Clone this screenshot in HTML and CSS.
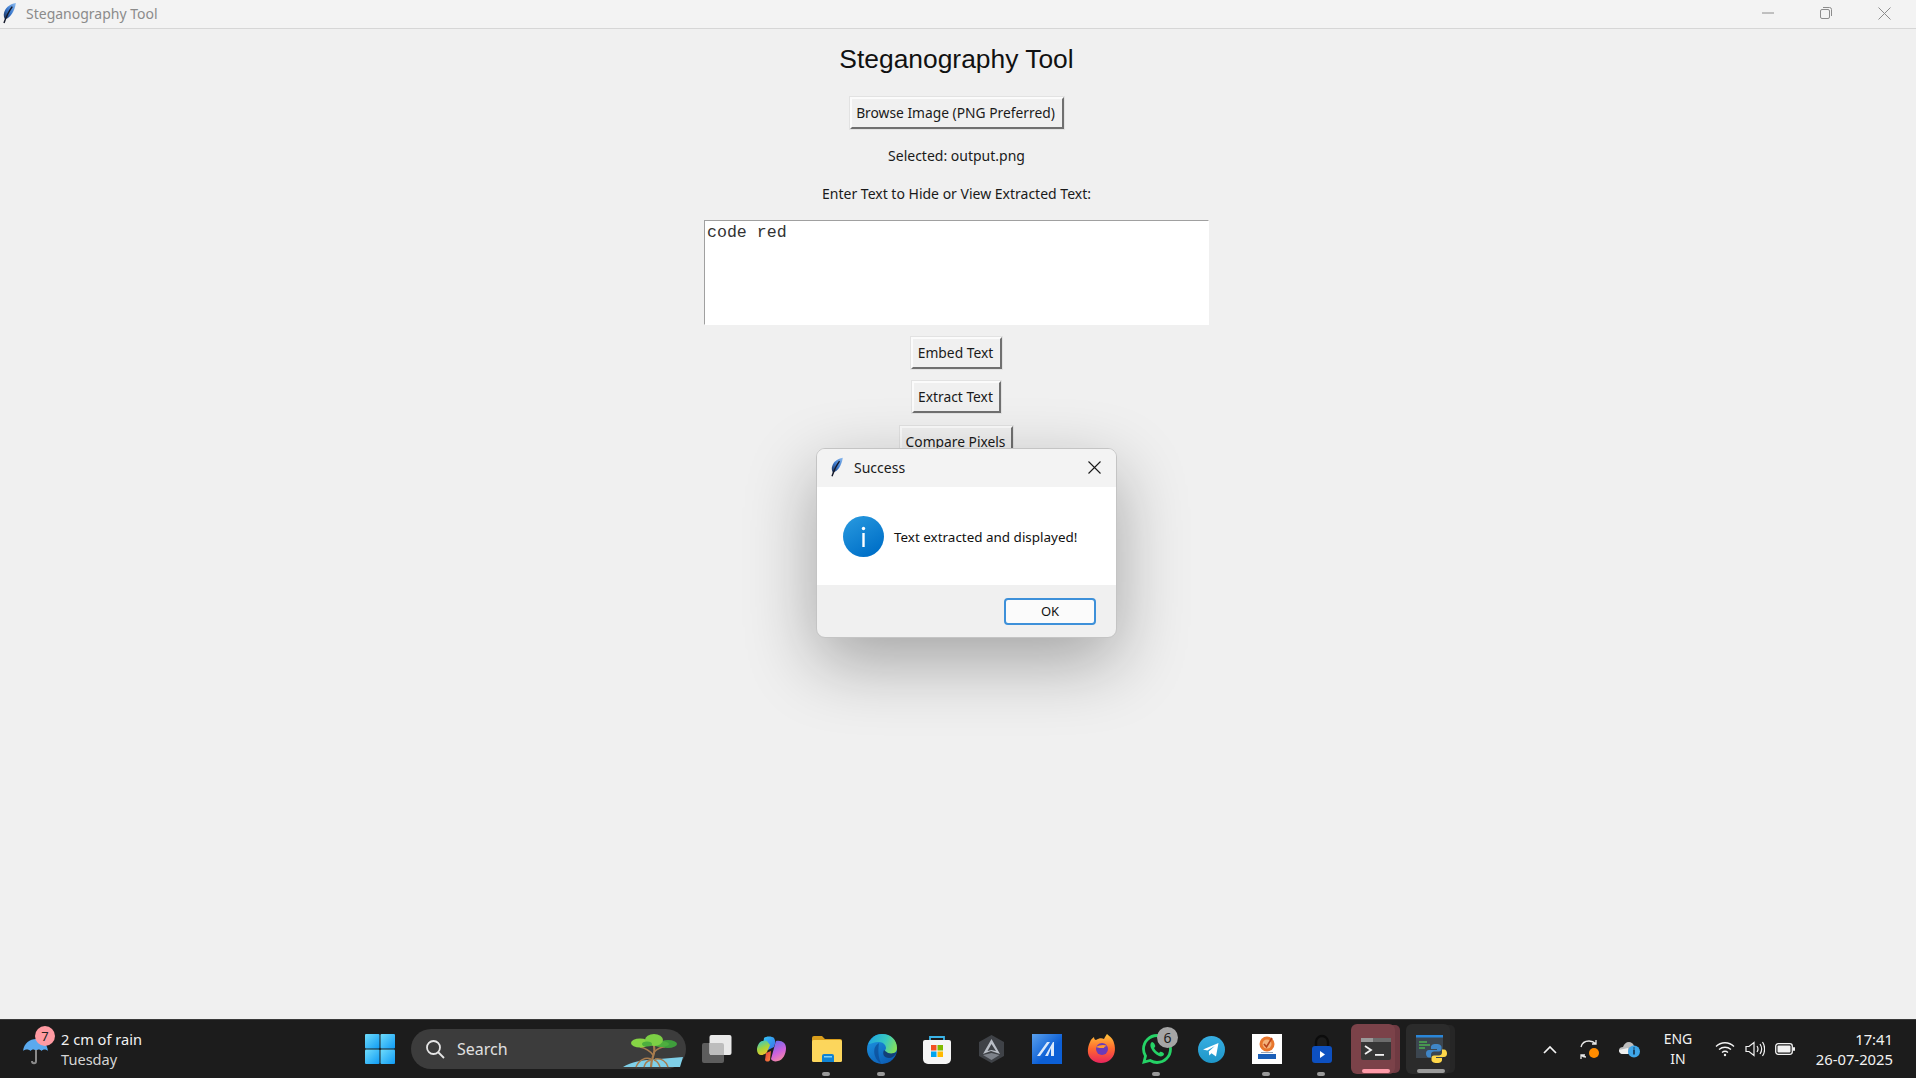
FILE: index.html
```html
<!DOCTYPE html>
<html lang="en">
<head>
    <meta charset="UTF-8">
    <meta name="viewport" content="width=device-width, initial-scale=1.0">
    <title>Steganography Tool</title>
    <link rel="stylesheet" href="styles.css">
</head>
<body>

    <svg class="svg-defs" width="0" height="0">
        <defs>
            <linearGradient id="featherBlue" x1="1" y1="0" x2="0" y2="1">
                <stop offset="0" stop-color="#8fbdf0"/>
                <stop offset="0.55" stop-color="#3a78cc"/>
                <stop offset="1" stop-color="#1a2c50"/>
            </linearGradient>
            <linearGradient id="infoBlue" x1="0" y1="0" x2="0.6" y2="1">
                <stop offset="0" stop-color="#2a9be0"/>
                <stop offset="1" stop-color="#0070c8"/>
            </linearGradient>
            <linearGradient id="winBlue" x1="0" y1="0" x2="1" y2="1">
                <stop offset="0" stop-color="#6fdcfb"/>
                <stop offset="1" stop-color="#0f9bf5"/>
            </linearGradient>
            <linearGradient id="edgeBlue" x1="0" y1="0" x2="0.7" y2="1">
                <stop offset="0" stop-color="#1e9ae6"/>
                <stop offset="1" stop-color="#0c5cb4"/>
            </linearGradient>
            <linearGradient id="edgeGreen" x1="0" y1="0.3" x2="1" y2="0.6">
                <stop offset="0" stop-color="#1fa8e0"/>
                <stop offset="0.55" stop-color="#38c8c0"/>
                <stop offset="1" stop-color="#86e05a"/>
            </linearGradient>
            <linearGradient id="copilotBlue" x1="0" y1="0" x2="1" y2="1">
                <stop offset="0" stop-color="#33c8f4"/>
                <stop offset="1" stop-color="#3a6cea"/>
            </linearGradient>
            <linearGradient id="copilotPink" x1="0.3" y1="0" x2="0.7" y2="1">
                <stop offset="0" stop-color="#6a6cec"/>
                <stop offset="0.55" stop-color="#cf62dc"/>
                <stop offset="1" stop-color="#f88e9c"/>
            </linearGradient>
            <linearGradient id="copilotGreen" x1="0.3" y1="0" x2="0.7" y2="1">
                <stop offset="0" stop-color="#3cc8c8"/>
                <stop offset="0.5" stop-color="#a6d43a"/>
                <stop offset="1" stop-color="#f8c22e"/>
            </linearGradient>
            <linearGradient id="copilotRed" x1="0" y1="0" x2="1" y2="1">
                <stop offset="0" stop-color="#e8383f"/>
                <stop offset="1" stop-color="#f88a3a"/>
            </linearGradient>
            <linearGradient id="foxOrange" x1="0.5" y1="0" x2="0.5" y2="1">
                <stop offset="0" stop-color="#ffc43a"/>
                <stop offset="0.5" stop-color="#ff6a2e"/>
                <stop offset="1" stop-color="#e8255d"/>
            </linearGradient>
            <linearGradient id="tgBlue" x1="0.5" y1="0" x2="0.5" y2="1">
                <stop offset="0" stop-color="#37aee2"/>
                <stop offset="1" stop-color="#1e96c8"/>
            </linearGradient>
            <symbol id="feather" viewBox="0 0 16 24">
                <path d="M15 1C8 2 2.500 7 1.800 13c-.2 2 .2 4 1.200 5.500 6.500-1 10.500-9 12-17.500z" fill="url(#featherBlue)"/>
                <path d="M11 5C8 9 5 14 2 23" stroke="#15192a" stroke-width="1.600" fill="none"/>
            </symbol>
        </defs>
    </svg>

    <header class="titlebar">
        <svg class="titlebar-icon"><use href="#feather"/></svg>
        <span class="titlebar-text">Steganography Tool</span>
        <div class="window-controls">
            <span class="window-control">
                <svg width="12" height="12" viewBox="0 0 12 12"><path d="M0 6h12" stroke="#8c8c8c" stroke-width="1"/></svg>
            </span>
            <span class="window-control">
                <svg width="12" height="12" viewBox="0 0 12 12" fill="none" stroke="#8c8c8c"><rect x=".5" y="2.500" width="9" height="9" rx="1.500"/><path d="M3 .5h6.500a2 2 0 0 1 2 2V9"/></svg>
            </span>
            <span class="window-control">
                <svg width="13" height="13" viewBox="0 0 13 13"><path d="M.5.5l12 12M12.500.5l-12 12" stroke="#8c8c8c" stroke-width="1"/></svg>
            </span>
        </div>
    </header>

    <main class="app">
        <h1>Steganography Tool</h1>
        <button class="tk-button browse-button">Browse Image (PNG Preferred)</button>
        <p class="tk-label selected-label">Selected: output.png</p>
        <p class="tk-label prompt-label">Enter Text to Hide or View Extracted Text:</p>
        <textarea class="text-box" readonly>code red</textarea>
        <button class="tk-button embed-button">Embed Text</button>
        <button class="tk-button extract-button">Extract Text</button>
        <button class="tk-button compare-button">Compare Pixels</button>

        <div class="dialog">
            <div class="dialog-title">
                <svg class="dialog-feather"><use href="#feather"/></svg>
                <span>Success</span>
                <svg class="dialog-close" width="13" height="13" viewBox="0 0 13 13"><path d="M.5.5l12 12M12.500.5l-12 12" stroke="#1a1a1a" stroke-width="1.100"/></svg>
            </div>
            <div class="dialog-body">
                <svg width="41" height="41" viewBox="0 0 41 41">
                    <circle cx="20.500" cy="20.500" r="20.500" fill="url(#infoBlue)"/>
                    <circle cx="20.500" cy="12.500" r="1.700" fill="#fff"/>
                    <rect x="19.300" y="17" width="2.400" height="14" fill="#fff"/>
                </svg>
                <span>Text extracted and displayed!</span>
            </div>
            <div class="dialog-footer">
                <button class="ok-button">OK</button>
            </div>
        </div>
    </main>

    <footer class="taskbar">
        <div class="weather">
            <svg class="weather-icon" width="30" height="34" viewBox="0 0 30 34">
                <path d="M1 19C2 11 8 7 14 7s11 4 12 12c-2-2-5-2-6.500 0-1.500-2-4-2-5.500 0-1.500-2-4-2-5.500 0C7 17 3 17 1 19z" fill="#5aa9ee"/>
                <path d="M14 18v11c0 3-4 3-4 0" stroke="#8a8a8a" stroke-width="2" fill="none"/>
            </svg>
            <span class="weather-badge">7</span>
            <div class="weather-text">
                <span>2 cm of rain</span>
                <span class="weather-day">Tuesday</span>
            </div>
        </div>

        <div class="tb-item">
            <svg width="30" height="30" viewBox="0 0 30 30" fill="url(#winBlue)">
                <rect width="14.500" height="14.500" rx="1"/><rect x="15.500" width="14.500" height="14.500" rx="1"/>
                <rect y="15.500" width="14.500" height="14.500" rx="1"/><rect x="15.500" y="15.500" width="14.500" height="14.500" rx="1"/>
            </svg>
        </div>

        <div class="search">
            <svg width="20" height="20" viewBox="0 0 20 20" fill="none" stroke="#e6e6e6" stroke-width="1.800"><circle cx="8.500" cy="8.500" r="6.500"/><path d="M13 13l6 6"/></svg>
            <span>Search</span>
            <svg class="search-art" width="60" height="34" viewBox="0 0 60 34">
                <path d="M0 33C8 28 20 26 30 25.500l30-2.500-3 10z" fill="#7fd0e8"/>
                <g stroke="#a87c4e" fill="none">
                    <path d="M28 33c0-6 2-10 3-14 1-3 0-5 0-8" stroke-width="2.200"/>
                    <path d="M30 21c-3-4-8-7-13-8M31 18c3-3 6-5 11-5" stroke-width="1.600"/>
                    <path d="M28 25c-6-2-12 1-15 8M28 26c-5 1-6 4-7 7M32 25c6-1 11 2 13 8M31 26c4 1 5 4 6 7" stroke-width="1.500"/>
                </g>
                <ellipse cx="17" cy="9" rx="9" ry="4.500" fill="#86d445"/>
                <ellipse cx="45" cy="10" rx="9" ry="4" fill="#3f9e3c"/>
                <ellipse cx="38" cy="10" rx="8" ry="3" fill="#4dae3e"/>
                <ellipse cx="31" cy="6" rx="9" ry="6" fill="#7ccf45"/>
                <ellipse cx="24" cy="10" rx="5" ry="2.500" fill="#4dae3e"/>
            </svg>
        </div>

        <div class="tb-apps">
            <div class="tb-item">
                <svg width="32" height="30" viewBox="0 0 32 30">
                    <rect x="1" y="9" width="22" height="20" rx="2" fill="#5d5d5d"/>
                    <rect x="8.500" y="1" width="22" height="20" rx="2" fill="#e9e9e9"/>
                    <path d="M8.500 9H21a2 2 0 0 1 2 2v10H10.500a2 2 0 0 1-2-2z" fill="#bdbdbd"/>
                </svg>
            </div>
            <div class="tb-item">
                <svg width="29" height="26" viewBox="0 0 29 26">
                    <path d="M7 2C9 0 15 0 17 2c2 3 1 6 0 9l-6 3-5-3z" fill="url(#copilotBlue)"/>
                    <path d="M19 5c6-1 10 2 10 7 0 6-3 12-8 13-3 1-6 0-7-2l3-11c1-3 1-5 2-7z" fill="url(#copilotPink)"/>
                    <path d="M5 5C2 6 0 10 0 14c0 3 2 5 4 5 2 0 5-1 6-3l3-7-3-4c-2-1-4 0-5 0z" fill="url(#copilotGreen)"/>
                    <path d="M9 17l5-2-1 9c-1 2-4 2-5 0z" fill="url(#copilotRed)"/>
                </svg>
            </div>
            <div class="tb-item">
                <svg width="32" height="28" viewBox="0 0 32 28">
                    <path d="M1 3a2 2 0 0 1 2-2h8l3 3h15a2 2 0 0 1 2 2v3H1z" fill="#d99e1c"/>
                    <rect x="1" y="5" width="30" height="22" rx="1.500" fill="#fcd65c"/>
                    <path d="M11 21a2 2 0 0 1 2-2h8a2 2 0 0 1 2 2v6H11z" fill="#1083d3"/>
                    <rect x="13" y="21" width="8" height="1.500" fill="#7fd0f6"/>
                </svg>
                <i class="tb-dot"></i>
            </div>
            <div class="tb-item">
                <svg width="30" height="32" viewBox="0 0 30 32">
                    <circle cx="15" cy="16" r="15" fill="url(#edgeBlue)"/>
                    <path d="M1.500 11C4 4.500 9 1 15 1c9 0 15 6 15 14 0 4-3 6-7 6-3 0-5-1-5-3 0-1 1-2 1-3 0-3-3-6-7-6-5 0-8 2-10.500 2z" fill="url(#edgeGreen)"/>
                    <path d="M17 17c-2 4 0 8 5 8 3 0 6-2 8-6-4 2-9 2-11-.5-1-.5-1-1-2-1.500z" fill="#123f78"/>
                    <path d="M12 10c-4 2-6 7-4 13 1 3 3 6 6 7-3-5-3-14-2-20z" fill="#0b4a94" opacity="0.700"/>
                </svg>
                <i class="tb-dot"></i>
            </div>
            <div class="tb-item">
                <svg width="30" height="30" viewBox="0 0 30 30">
                    <path d="M8 7V3h14v4" fill="none" stroke="#3ab4e8" stroke-width="1.800"/>
                    <path d="M1 8a2 2 0 0 1 2-2h24a2 2 0 0 1 2 2v17a5 5 0 0 1-5 5H6a5 5 0 0 1-5-5z" fill="#f5f5f5"/>
                    <rect x="9" y="11" width="5.500" height="5.500" fill="#f25022"/>
                    <rect x="15.500" y="11" width="5.500" height="5.500" fill="#7fba00"/>
                    <rect x="9" y="17.500" width="5.500" height="5.500" fill="#00a4ef"/>
                    <rect x="15.500" y="17.500" width="5.500" height="5.500" fill="#ffb900"/>
                </svg>
            </div>
            <div class="tb-item">
                <svg width="27" height="28" viewBox="0 0 27 28">
                    <path d="M13.500 0L26 7v14l-12.500 7L1 21V7z" fill="#3f4247"/>
                    <path d="M13.500 4L5 19l8-3 9 3z" fill="#b9bec6"/>
                    <path d="M13.500 9L9.500 16l4-1 4.500 1z" fill="#3f4247"/>
                    <path d="M5 20l8.500 5 8-5-8-2z" fill="#7d828a"/>
                </svg>
            </div>
            <div class="tb-item">
                <div class="app-square app-square-blue">
                    <svg width="30" height="30" viewBox="0 0 30 30">
                        <path d="M5 22L15 8h3L8 22zM13 22L21 8h1v14h-3v-8l-3 8z" fill="#dbe9fb"/>
                    </svg>
                </div>
            </div>
            <div class="tb-item">
                <svg width="30" height="30" viewBox="0 0 30 30">
                    <path d="M3 8c1-3 3-4 4-5 0 2 1 3 2 3 3-2 6-2 8-1 1-2 2-4 3-5 3 3 6 4 7 9 2 6 1 13-4 17-5 4-14 4-19-1C0 21 0 14 3 8z" fill="url(#foxOrange)"/>
                    <circle cx="15" cy="15" r="6" fill="#6b3ab8"/>
                    <path d="M9 13c3-2 8-3 11-1-2 0-3 1-3 2-3 0-6 0-8-1z" fill="#ff9a2e"/>
                </svg>
            </div>
            <div class="tb-item">
                <svg width="30" height="30" viewBox="0 0 30 30">
                    <path d="M15 1.500C7.500 1.500 1.500 7.500 1.500 15c0 2.600.7 5 2 7L2 28l6.200-1.500c2 1.200 4.300 2 6.800 2 7.500 0 13.500-6 13.500-13.500S22.500 1.500 15 1.500z" fill="none" stroke="#25d366" stroke-width="2.800"/>
                    <path d="M10 8c-2 1-2 4-1 6 2 4 4 6 8 8 2 1 5 0 5-2 0-1-3-3-4-2l-1 1c-2-1-4-3-5-5l1-1c1-1-1-5-3-5z" fill="#25d366"/>
                </svg>
                <span class="tb-count">6</span>
                <i class="tb-dot"></i>
            </div>
            <div class="tb-item">
                <svg width="27" height="27" viewBox="0 0 27 27">
                    <circle cx="13.500" cy="13.500" r="13.500" fill="url(#tgBlue)"/>
                    <path d="M5 13.500L20.500 7l-2.500 13.500-4.500-3.300-2.200 2.200-.5-4 6-5.500-7.500 4.700z" fill="#fff"/>
                </svg>
            </div>
            <div class="tb-item">
                <div class="app-square app-square-white">
                    <svg width="30" height="30" viewBox="0 0 30 30">
                        <circle cx="15" cy="10" r="7.500" fill="#e8762c"/>
                        <circle cx="15" cy="10" r="4.500" fill="#f3b27a"/>
                        <path d="M12 10l2.500 3L20 4" stroke="#b8431a" stroke-width="1.600" fill="none"/>
                        <rect x="6" y="20" width="18" height="5" fill="#1b5fb8"/>
                        <rect x="9" y="18" width="12" height="1" fill="#9aa7b8"/>
                    </svg>
                </div>
                <i class="tb-dot"></i>
            </div>
            <div class="tb-item">
                <svg width="22" height="30" viewBox="0 0 22 30">
                    <path d="M5 14V8a6 6 0 0 1 12 0v6" fill="none" stroke="#0c0c0c" stroke-width="2.400"/>
                    <rect x="1" y="12" width="20" height="17" rx="3" fill="#0d50c0"/>
                    <path d="M9 17l5 3.500-5 3.500z" fill="#fff"/>
                </svg>
                <i class="tb-dot"></i>
            </div>
            <div class="tb-item">
                <div class="tb-open tb-open-terminal">
                    <svg width="30" height="22" viewBox="0 0 30 22">
                        <rect width="30" height="22" rx="2" fill="#363636"/>
                        <rect width="12" height="4" fill="#9a9a9a"/>
                        <rect x="12" width="18" height="4" fill="#6c6c6c"/>
                        <path d="M4 8l6 4-6 4" stroke="#f2f2f2" stroke-width="1.800" fill="none"/>
                        <rect x="14" y="16" width="9" height="1.800" fill="#f2f2f2"/>
                    </svg>
                    <i class="tb-bar tb-bar-pink"></i>
                </div>
            </div>
            <div class="tb-item">
                <div class="tb-open">
                    <svg width="32" height="30" viewBox="0 0 32 30">
                        <rect x="1" y="1" width="27" height="23" fill="#3c4650"/>
                        <rect x="1" y="1" width="27" height="2.500" fill="#2a86d8"/>
                        <path d="M4 8h8M4 11h11M4 14h6" stroke="#4caf50" stroke-width="1.300"/>
                        <path d="M21 10c-4 0-5 1.500-5 3v2h6v1h-8c-2 0-3 1.500-3 3.500s1 4 3 4h2v-3c0-2 1.500-3 3-3h5c1.500 0 2.500-1 2.500-2.500V13c0-1.500-1.500-3-5.500-3z" fill="#3f86c8"/>
                        <path d="M22 29c4 0 5-1.500 5-3v-2h-6v-1h8c2 0 3-1.500 3-3.500s-1-4-3-4h-2v3c0 2-1.500 3-3 3h-5c-1.500 0-2.500 1-2.500 2.500V26c0 1.500 1.500 3 5.500 3z" fill="#ffd84a"/>
                    </svg>
                    <i class="tb-bar"></i>
                </div>
            </div>
        </div>

        <div class="tray">
            <span class="tray-item">
                <svg width="14" height="9" viewBox="0 0 14 9" fill="none" stroke="#f2f2f2" stroke-width="1.700"><path d="M1 8l6-6 6 6"/></svg>
            </span>
            <span class="tray-item">
                <svg width="22" height="22" viewBox="0 0 22 22" fill="none" stroke="#e8e8e8" stroke-width="1.300">
                    <path d="M2 9c1-4 4-6 8-6 3 0 5 1 7 3M17 2v4h-4"/>
                    <path d="M2 17c1 1 3 2 5 2M2 21v-4h4"/>
                    <circle cx="15" cy="15" r="5" fill="#ff8c00" stroke="none"/>
                </svg>
            </span>
            <span class="tray-item">
                <svg width="22" height="18" viewBox="0 0 22 18">
                    <path d="M4 14c-3 0-4-2-4-4s2-3 4-3c1-3 3-5 6-5 2 0 4 1 5 4 2 0 4 2 4 4H10v4z" fill="#bdbdbd"/>
                    <path d="M0 10c0 2 1 4 4 4h5V8z" fill="#efefef"/>
                    <circle cx="15" cy="11.500" r="6" fill="#3ea6e8"/>
                    <path d="M15 9.500v5M15 7.500v1" stroke="#10243a" stroke-width="1.500"/>
                </svg>
            </span>
            <span class="tray-lang">ENG<br>IN</span>
            <span class="tray-icon">
                <svg width="20" height="16" viewBox="0 0 20 16" fill="none" stroke="#f2f2f2" stroke-width="1.300">
                    <path d="M1 5.500c5-5 13-5 18 0M4 8.500c3.500-3 8.500-3 12 0M7 11.500c1.800-1.500 4.200-1.500 6 0"/>
                    <circle cx="10" cy="14" r="1.200" fill="#f2f2f2" stroke="none"/>
                </svg>
            </span>
            <span class="tray-icon">
                <svg width="20" height="16" viewBox="0 0 20 16" fill="none" stroke="#f2f2f2" stroke-width="1.200">
                    <path d="M1 5.500h3L9 1.500v13l-5-4H1z"/>
                    <path d="M12 5c1.200 1.800 1.200 4.200 0 6M15 3c2 3 2 7 0 10M17.500 1c2.800 4 2.800 10 0 14"/>
                </svg>
            </span>
            <span class="tray-icon">
                <svg width="20" height="12" viewBox="0 0 20 12">
                    <rect x=".7" y=".7" width="16.600" height="10.600" rx="2.500" fill="none" stroke="#f2f2f2" stroke-width="1.300"/>
                    <rect x="2.500" y="2.500" width="13" height="7" rx="1" fill="#f2f2f2"/>
                    <rect x="18" y="4" width="2" height="4" rx="1" fill="#f2f2f2"/>
                </svg>
            </span>
            <div class="clock">
                <span>17:41</span>
                <span>26-07-2025</span>
            </div>
        </div>
    </footer>

</body>
</html>
```
FILE: styles.css
```css
* {
    box-sizing: border-box;
}

body {
    font-family: "Noto Sans", Arial, sans-serif;
    background-color: #f0f0f0;
    margin: 0;
    padding: 0;
    width: 1916px;
    height: 1078px;
    display: flex;
    flex-direction: column;
    overflow: hidden;
}

.svg-defs {
    position: absolute;
}

.titlebar {
    height: 29px;
    flex-shrink: 0;
    display: flex;
    align-items: center;
    padding-bottom: 2px;
    background-color: #f3f3f3;
    border-bottom: 1px solid #d6d6d6;
}

.titlebar-icon {
    width: 15px;
    height: 22px;
    margin-left: 2px;
}

.titlebar-text {
    margin-left: 9px;
    font-size: 14px;
    color: #8b8b8b;
}

.window-controls {
    margin-left: auto;
    margin-right: 3px;
    display: flex;
}

.window-control {
    width: 58px;
    height: 26px;
    display: flex;
    align-items: center;
    justify-content: center;
}

.app {
    flex: 1;
    position: relative;
    display: flex;
    flex-direction: column;
    align-items: center;
    width: 100%;
    padding-right: 3px;
}

h1 {
    font-family: "Liberation Sans", Arial, sans-serif;
    font-size: 26.4px;
    font-weight: 400;
    line-height: 32px;
    color: #111;
    margin: 14px 0 0;
}

.tk-button {
    font-family: "Noto Sans", Arial, sans-serif;
    font-size: 13.8px;
    color: #1a1a1a;
    height: 32px;
    padding: 0 2px 2px 0;
    background-color: #f0f0f0;
    border: 2px solid;
    border-color: #fbfbfb #707070 #707070 #fbfbfb;
    box-shadow: 0 0 0 1px #e2e2e2;
}

.browse-button {
    width: 214px;
    margin-top: 22px;
}

.embed-button {
    width: 91px;
    margin-top: 12px;
}

.extract-button {
    width: 89px;
    margin-top: 12px;
}

.compare-button {
    width: 113px;
    margin-top: 13px;
}

.tk-label {
    font-size: 14px;
    line-height: 20px;
    color: #1a1a1a;
    margin: 0;
}

.selected-label {
    margin-top: 17px;
}

.prompt-label {
    margin-top: 18px;
}

.text-box {
    display: block;
    width: 505px;
    height: 105px;
    margin-top: 16px;
    padding: 2px 2px;
    font-family: "Liberation Mono", "Courier New", monospace;
    font-size: 16.6px;
    line-height: 19px;
    color: #333;
    background-color: #fff;
    border: 1px solid;
    border-color: #a0a0a0 #fff #fff #a0a0a0;
    resize: none;
    outline: none;
}

.dialog {
    position: absolute;
    left: 816px;
    top: 419px;
    width: 301px;
    height: 190px;
    display: flex;
    flex-direction: column;
    background-color: #f0f0f0;
    border: 1px solid #c4c4c4;
    border-radius: 9px;
    overflow: hidden;
    box-shadow: 0 24px 70px rgba(0, 0, 0, 0.32);
}

.dialog-title {
    height: 38px;
    display: flex;
    align-items: center;
    padding: 0 15px 2px 13px;
    background-color: #f3f3f3;
    font-size: 14px;
    color: #1a1a1a;
}

.dialog-feather {
    width: 14px;
    height: 20px;
    margin-right: 10px;
}

.dialog-close {
    margin-left: auto;
}

.dialog-body {
    height: 98px;
    display: flex;
    align-items: center;
    gap: 10px;
    padding-left: 26px;
    background-color: #fff;
    font-size: 13.45px;
    line-height: 20px;
    color: #111;
}

.dialog-body span {
    padding-top: 2px;
}

.dialog-footer {
    flex: 1;
    display: flex;
    justify-content: flex-end;
    align-items: center;
    padding-right: 20px;
}

.ok-button {
    width: 92px;
    height: 27px;
    padding: 0;
    font-family: "Noto Sans", Arial, sans-serif;
    font-size: 13px;
    color: #111;
    background-color: #fbfbfb;
    border: 2px solid #3d90d9;
    border-radius: 4px;
}

.taskbar {
    height: 59px;
    flex-shrink: 0;
    display: flex;
    align-items: center;
    background-color: #1c1c1c;
    border-top: 1px solid #3a3a3a;
    color: #f2f2f2;
}

.weather {
    position: relative;
    width: 352px;
    height: 100%;
    display: flex;
    align-items: center;
    padding-left: 22px;
}

.weather-badge {
    position: absolute;
    left: 35px;
    top: 6px;
    width: 20px;
    height: 20px;
    border-radius: 50%;
    background-color: #ff9aa2;
    color: #222;
    font-size: 13px;
    line-height: 20px;
    text-align: center;
}

.weather-text {
    margin-left: 9px;
    padding-bottom: 1px;
    display: flex;
    flex-direction: column;
    font-size: 14.6px;
    line-height: 20px;
}

.weather-day {
    color: #d5d5d5;
}

.tb-item {
    position: relative;
    width: 55px;
    height: 100%;
    flex-shrink: 0;
    display: flex;
    align-items: center;
    justify-content: center;
}

.search {
    position: relative;
    width: 275px;
    height: 40px;
    margin: 0 3px 0 4px;
    display: flex;
    align-items: center;
    gap: 12px;
    padding-left: 14px;
    background-color: #3c3c3c;
    border-radius: 20px;
    font-size: 16px;
    color: #e0e0e0;
}

.search-art {
    position: absolute;
    right: 3px;
    bottom: 1px;
}

.tb-apps {
    display: flex;
    height: 100%;
}

.tb-dot {
    position: absolute;
    left: 23px;
    bottom: 2px;
    width: 8px;
    height: 4px;
    border-radius: 2px;
    background-color: #9a9a9a;
}

.tb-count {
    position: absolute;
    left: 28px;
    top: 7px;
    width: 21px;
    height: 21px;
    border-radius: 50%;
    background-color: #a5a5a5;
    color: #1c1c1c;
    font-size: 14px;
    line-height: 21px;
    text-align: center;
}

.app-square {
    width: 30px;
    height: 30px;
}

.app-square-blue {
    background: linear-gradient(135deg, #5aa0ec, #0c5fd6 60%);
}

.app-square-white {
    background-color: #fff;
}

.tb-open {
    position: relative;
    width: 44px;
    height: 50px;
    margin-right: 7px;
    padding-left: 6px;
    display: flex;
    align-items: center;
    justify-content: center;
    background-color: #2b2b2b;
    border-radius: 6px;
    box-shadow: 6px 0 0 -1px #262626;
}

.tb-open-terminal {
    background-color: #7b4249;
    box-shadow: 6px 0 0 -1px #6f3a42;
}

.tb-open svg {
    flex-shrink: 0;
}

.tb-bar {
    position: absolute;
    left: 11px;
    bottom: 1px;
    width: 28px;
    height: 4px;
    border-radius: 2px;
    background-color: #9a9a9a;
}

.tb-bar-pink {
    background-color: #ff9aa8;
}

.tray {
    margin-left: auto;
    width: 386px;
    height: 100%;
    display: flex;
    align-items: center;
    padding-right: 23px;
}

.tray-item {
    width: 40px;
    display: flex;
    align-items: center;
    justify-content: center;
}

.tray-lang {
    width: 56px;
    margin-right: 4px;
    text-align: center;
    font-size: 14px;
    line-height: 20px;
}

.tray-icon {
    width: 30px;
    display: flex;
    align-items: center;
    justify-content: center;
}

.clock {
    margin-left: auto;
    padding-bottom: 1px;
    display: flex;
    flex-direction: column;
    align-items: flex-end;
    font-size: 14.8px;
    line-height: 20px;
}
```
